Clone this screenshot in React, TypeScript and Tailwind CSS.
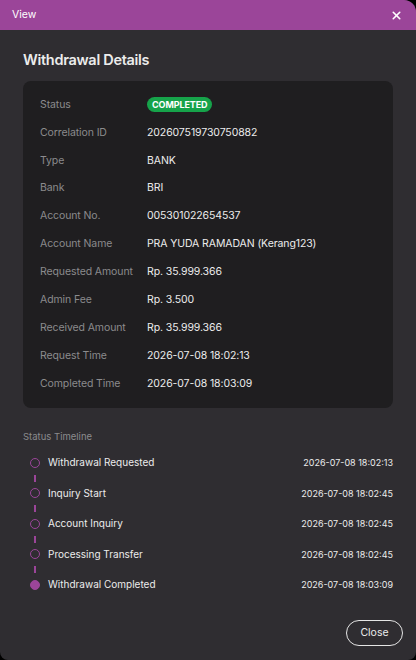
import { X } from 'lucide-react';

const details: { label: string; value?: string }[] = [
  { label: 'Status' },
  { label: 'Correlation ID', value: '202607519730750882' },
  { label: 'Type', value: 'BANK' },
  { label: 'Bank', value: 'BRI' },
  { label: 'Account No.', value: '005301022654537' },
  { label: 'Account Name', value: 'PRA YUDA RAMADAN (Kerang123)' },
  { label: 'Requested Amount', value: 'Rp. 35.999.366' },
  { label: 'Admin Fee', value: 'Rp. 3.500' },
  { label: 'Received Amount', value: 'Rp. 35.999.366' },
  { label: 'Request Time', value: '2026-07-08 18:02:13' },
  { label: 'Completed Time', value: '2026-07-08 18:03:09' },
];

const timeline = [
  { step: 'Withdrawal Requested', at: '2026-07-08 18:02:13' },
  { step: 'Inquiry Start', at: '2026-07-08 18:02:45' },
  { step: 'Account Inquiry', at: '2026-07-08 18:02:45' },
  { step: 'Processing Transfer', at: '2026-07-08 18:02:45' },
  { step: 'Withdrawal Completed', at: '2026-07-08 18:03:09', done: true },
];

export default function App() {
  return (
    <div
      className="h-[660px] w-[416px] bg-black"
      style={{ fontFamily: 'Inter, "Noto Sans", sans-serif' }}
    >
      <div className="flex h-full flex-col overflow-hidden rounded-lg rounded-tl-none rounded-tr-xl bg-[#2f2d31]">
        <div className="flex h-[30px] items-center justify-between bg-[#9b4599] pl-3 pr-[13px]">
          <span className="text-[10.5px] text-white">View</span>
          <X className="h-[13px] w-[13px] text-white" strokeWidth={3} />
        </div>

        <div className="flex flex-1 flex-col px-[23px]">
          <h2 className="mt-[19px] text-[14.5px] font-semibold tracking-[-0.3px] text-[#ececec]">
            Withdrawal Details
          </h2>

          <div className="mt-[10px] rounded-lg bg-[#1f1e20] px-[17px] py-[10px]">
            {details.map((d) => (
              <div key={d.label} className="flex h-[27.9px] items-center text-[10.5px] tracking-[-0.1px]">
                <span className="w-[107px] text-[#8b8b8d]">{d.label}</span>
                {d.value ? (
                  <span className="text-[#ececec]">{d.value}</span>
                ) : (
                  <span className="rounded-full bg-[#16a34a] px-[5px] py-[1px] text-[9px] font-bold text-white">
                    COMPLETED
                  </span>
                )}
              </div>
            ))}
          </div>

          <div className="mt-[22px] text-[9.5px] text-[#8b8b8d]">Status Timeline</div>

          <ul className="mt-[12px] flex flex-col">
            {timeline.map((t, i) => (
              <li key={t.step} className="flex flex-col">
                <div className="flex h-[14px] items-center">
                  <span
                    className={`ml-[7px] h-[10px] w-[10px] rounded-full border-[1.5px] border-[#9b4599] ${
                      t.done ? 'bg-[#9b4599]' : ''
                    }`}
                  />
                  <span className="ml-[8px] flex-1 text-[10px] text-[#ececec]">{t.step}</span>
                  <span className="text-[9px] text-[#ececec]">{t.at}</span>
                </div>
                {i < timeline.length - 1 && (
                  <div className="flex h-[16.5px] items-center">
                    <span className="ml-[11px] h-[7px] w-[2px] bg-[#9b4599]" />
                  </div>
                )}
              </li>
            ))}
          </ul>

          <div className="mt-auto mb-[14px] -mr-[10px] flex justify-end">
            <button className="h-[26px] w-[57px] rounded-full border border-[#e5e5e5] text-[10.5px] text-[#ececec]">
              Close
            </button>
          </div>
        </div>
      </div>
    </div>
  );
}
